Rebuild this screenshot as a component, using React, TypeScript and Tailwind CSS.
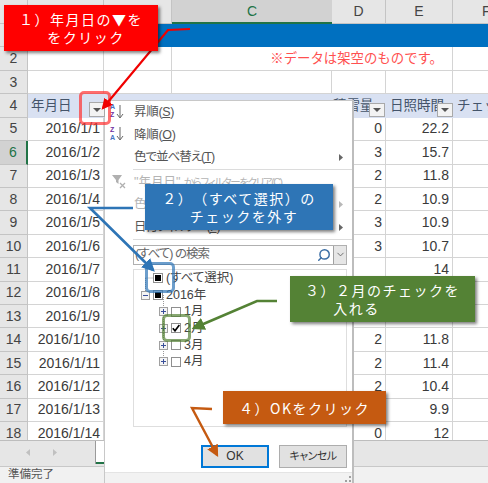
import React from 'react'
import { ChevronDown, Search } from 'lucide-react'

const rows = [
  ['1', '', '', ''],
  ['2', '', '', ''],
  ['3', '', '', ''],
  ['4', '', '', ''],
  ['5', '2016/1/1', '0', '22.2'],
  ['6', '2016/1/2', '3', '15.7'],
  ['7', '2016/1/3', '2', '11.8'],
  ['8', '2016/1/4', '2', '10.9'],
  ['9', '2016/1/5', '3', '10.9'],
  ['10', '2016/1/6', '3', '10.7'],
  ['11', '2016/1/7', '', '14'],
  ['12', '2016/1/8', '', ''],
  ['13', '2016/1/9', '', ''],
  ['14', '2016/1/10', '2', '11.8'],
  ['15', '2016/1/11', '2', '11.4'],
  ['16', '2016/1/12', '2', '10.4'],
  ['17', '2016/1/13', '', '9.9'],
  ['18', '2016/1/14', '0', '12'],
]

const gridCols = 'grid grid-cols-[28px_76px_68px_160px_54px_67px_35px]'
const cell = 'border-r border-b border-[#d4d4d4] flex items-center justify-end pr-[3px] overflow-hidden whitespace-nowrap'

const FilterBtn = ({ className }: { className: string }) => (
  <span className={`absolute flex items-center justify-center bg-[#f3f3f3] border border-[#a9a9a9] ${className}`}>
    <svg width="8" height="4" viewBox="0 0 8 4"><path d="M0 0h8L4 4z" fill="#555" /></svg>
  </span>
)

const HeaderRow = () => (
  <div className={`${gridCols} h-[24px] bg-[#e6e6e6] text-[14px] text-[#444]`}>
    <div className="border-r border-b border-[#c4c4c4]" />
    <div className="border-r border-b border-[#c4c4c4]" />
    <div className="border-r border-b border-[#c4c4c4]" />
    <div className="flex items-center justify-center bg-[#d2d2d2] border-b-2 border-[#217346] text-[#217346]">C</div>
    <div className="flex items-center justify-center border-r border-b border-[#c4c4c4]">D</div>
    <div className="flex items-center justify-center border-r border-b border-[#c4c4c4]">E</div>
    <div className="flex items-center pl-[29px] overflow-hidden border-b border-[#c4c4c4]">F</div>
  </div>
)

const Row = ({ r }: { r: string[] }) => {
  const n = r[0]
  const headCls = n === '6'
    ? 'bg-[#d2d2d2] text-[#217346] border-r-2 border-r-[#217346]'
    : 'bg-[#e6e6e6] text-[#444] border-r border-r-[#c4c4c4]'
  if (n === '1') {
    return (
      <div className={`${gridCols} h-[23.43px]`}>
        <div className={`flex items-center justify-center border-b border-[#c4c4c4] ${headCls}`}>{n}</div>
        <div className="col-span-6 bg-[#0070c0]" />
      </div>
    )
  }
  if (n === '2') {
    return (
      <div className={`${gridCols} h-[23.43px]`}>
        <div className={`flex items-center justify-center border-b border-[#c4c4c4] ${headCls}`}>{n}</div>
        <div className={cell} />
        <div className={cell} />
        <div className={`${cell} col-span-3 text-[#ff5050] text-[13.4px] pr-[9px]`}>※データは架空のものです。</div>
        <div className="border-b border-[#d4d4d4]" />
      </div>
    )
  }
  if (n === '4') {
    return (
      <div className={`${gridCols} h-[23.43px] text-[13.5px] text-[#44546a]`}>
        <div className={`flex items-center justify-center border-b border-[#c4c4c4] text-[14px] ${headCls}`}>{n}</div>
        <div className="relative bg-[#d9e1f2] flex items-center pl-[3px]">年月日</div>
        <div className="bg-[#d9e1f2]" />
        <div className="bg-[#d9e1f2]" />
        <div className="relative bg-[#d9e1f2] flex items-center pl-[1px] whitespace-nowrap">
          積雪量
          <FilterBtn className="left-[37px] top-[9px] w-[16px] h-[14px]" />
        </div>
        <div className="relative bg-[#d9e1f2] flex items-center pl-[4px] whitespace-nowrap overflow-visible">
          日照時間
          <FilterBtn className="left-[51px] top-[9px] w-[16px] h-[14px]" />
        </div>
        <div className="bg-[#d9e1f2] flex items-center pl-[4px] whitespace-nowrap overflow-hidden">チェック</div>
      </div>
    )
  }
  return (
    <div className={`${gridCols} h-[23.43px] text-[#3a3a3a]`}>
      <div className={`flex items-center justify-center border-b border-[#c4c4c4] ${headCls}`}>{n}</div>
      <div className={cell}>{r[1]}</div>
      <div className={cell} />
      <div className={cell} />
      <div className={cell}>{r[2]}</div>
      <div className={cell}>{r[3]}</div>
      <div className="border-b border-[#d4d4d4]" />
    </div>
  )
}

const MenuItem = ({ label, disabled, arrow, icon }: { label: React.ReactNode; disabled?: boolean; arrow?: boolean; icon?: React.ReactNode }) => (
  <div className={`relative h-[22.6px] flex items-center pl-[29px] pr-[9px] whitespace-nowrap text-[12.5px] [font-feature-settings:'palt'] ${disabled ? 'text-[#b4b4b4]' : 'text-[#555]'}`}>
    {icon}
    <span>{label}</span>
    {arrow && (
      <svg className="ml-auto" width="4" height="7" viewBox="0 0 4 7">
        <path d="M0 0l4 3.5L0 7z" fill={disabled ? '#b8b8b8' : '#666'} />
      </svg>
    )}
  </div>
)

const SortIcon = ({ top, bottom, topCls, bottomCls }: { top: string; bottom: string; topCls: string; bottomCls: string }) => (
  <span className="absolute left-[5px] top-[2px] flex items-center">
    <span className="flex flex-col text-[7px] leading-[8px] font-bold">
      <span className={topCls}>{top}</span>
      <span className={bottomCls}>{bottom}</span>
    </span>
    <svg width="8" height="15" viewBox="0 0 8 15" className="ml-[1px]">
      <path d="M4 1v12M1 10l3 4 3-4" fill="none" stroke="#666" strokeWidth="1" />
    </svg>
  </span>
)

const Expander = ({ sign }: { sign: 'plus' | 'minus' }) => (
  <svg width="9" height="9" viewBox="0 0 9 9" className="shrink-0 bg-white">
    <rect x="0.5" y="0.5" width="8" height="8" fill="#f4f4f4" stroke="#a0a0a0" />
    <path d={sign === 'plus' ? 'M2 4.5h5M4.5 2v5' : 'M2 4.5h5'} stroke="#3a4f9a" strokeWidth="1" />
  </svg>
)

const Box = ({ mark }: { mark?: 'mixed' | 'check' }) => (
  <span className="shrink-0 w-[10px] h-[10px] border border-[#8f8f8f] bg-white flex items-center justify-center">
    {mark === 'mixed' && <span className="w-[6px] h-[6px] bg-black" />}
    {mark === 'check' && (
      <svg width="8" height="8" viewBox="0 0 8 8">
        <path d="M0.8 4.2l2.2 2.6L7.4 1" fill="none" stroke="#000" strokeWidth="1.7" />
      </svg>
    )}
  </span>
)

const TreeRow = ({ indent, sign, mark, label }: { indent: string; sign?: 'plus' | 'minus'; mark?: 'mixed' | 'check'; label: string }) => (
  <div className={`h-[16.7px] flex items-center whitespace-nowrap text-[12.5px] [font-feature-settings:'palt'] text-[#444] ${indent}`}>
    {sign ? <Expander sign={sign} /> : <span className="w-[9px] shrink-0" />}
    <span className="w-[3px] shrink-0" />
    <Box mark={mark} />
    <span className="ml-[3px]">{label}</span>
  </div>
)

const Callout = ({ className, first, second, secondCls }: { className: string; first: string; second?: string; secondCls?: string }) => (
  <div className={`absolute flex flex-col items-center justify-center text-white text-[14px] leading-[18px] tracking-[1.5px] font-['Noto_Sans_CJK_JP',sans-serif] [text-spacing-trim:space-all] whitespace-nowrap shadow-[2px_2px_3px_rgba(0,0,0,0.5)] ${className}`}>
    <div>{first}</div>
    {second && <div className={secondCls}>{second}</div>}
  </div>
)

const Arrows = () => (
  <svg className="absolute left-0 top-0 pointer-events-none" width="488" height="483" viewBox="0 0 488 483">
    <defs>
      <marker id="hr" markerWidth="5" markerHeight="5" refX="4" refY="2.5" orient="auto"><path d="M0 0l5 2.5L0 5z" fill="#f00000" /></marker>
      <marker id="hb" markerWidth="5" markerHeight="5" refX="4" refY="2.5" orient="auto"><path d="M0 0l5 2.5L0 5z" fill="#2e75b6" /></marker>
      <marker id="hg" markerWidth="5" markerHeight="5" refX="4" refY="2.5" orient="auto"><path d="M0 0l5 2.5L0 5z" fill="#548235" /></marker>
      <marker id="ho" markerWidth="5" markerHeight="5" refX="4" refY="2.5" orient="auto"><path d="M0 0l5 2.5L0 5z" fill="#c55a11" /></marker>
    </defs>
    <polyline points="190,29 168,30 103,108" fill="none" stroke="#f00000" strokeWidth="2.2" markerEnd="url(#hr)" />
    <polyline points="133,208 90,208 153,270" fill="none" stroke="#2e75b6" strokeWidth="2.6" markerEnd="url(#hb)" />
    <polyline points="277,301 257,301 194,328" fill="none" stroke="#548235" strokeWidth="2.6" markerEnd="url(#hg)" />
    <polyline points="212,409 192,408 217,455" fill="none" stroke="#c55a11" strokeWidth="2.4" markerEnd="url(#ho)" />
  </svg>
)

export default function App() {
  return (
    <div className="relative w-[488px] h-[483px] overflow-hidden bg-white text-[14px] font-['Liberation_Sans','Noto_Sans_CJK_JP',sans-serif]">
      <HeaderRow />
      <div className="h-[416px] overflow-hidden">
        {rows.map((r) => <Row key={r[0]} r={r} />)}
      </div>
      <div className="h-[26px] flex bg-[#e6e6e6] border-t border-[#bdbdbd]">
        <div className="w-[96px] h-[23px] border-r border-[#9a9a9a] flex items-center gap-[23px] pl-[26px]">
          <svg width="4" height="7" viewBox="0 0 4 7"><path d="M4 0L0 3.5 4 7z" fill="#c0c0c0" /></svg>
          <svg width="4" height="7" viewBox="0 0 4 7"><path d="M0 0l4 3.5L0 7z" fill="#c0c0c0" /></svg>
        </div>
        <div className="w-[9px] h-[23px] bg-white border-b-2 border-[#217346]" />
      </div>
      <div className="h-[17px] bg-[#f1f1f1] border-t border-[#c8c8c8] flex items-center pl-[8px] text-[11.5px] text-[#555]">
        準備完了
      </div>

      {/* filter dropdown */}
      <div className="absolute left-[104px] top-[100px] w-[250px] h-[383px] bg-white border-t border-l border-[#c8c8c8] border-r-2 border-r-[#bdbdbd] flex flex-col">
        <MenuItem label={<span className="tracking-[-0.3px]">昇順(<u>S</u>)</span>} icon={<SortIcon top="A" bottom="Z" topCls="text-[#4472c4]" bottomCls="text-[#7030a0]" />} />
        <MenuItem label={<span className="tracking-[-0.3px]">降順(<u>O</u>)</span>} icon={<SortIcon top="Z" bottom="A" topCls="text-[#7030a0]" bottomCls="text-[#4472c4]" />} />
        <MenuItem label={<span className="tracking-[-1px]">色で並べ替え(<u>T</u>)</span>} arrow />
        <div className="my-[0.5px] ml-[28px] border-t border-[#dcdcdc]" />
        <MenuItem
          label={<>"年月日" <span className="text-[10.5px] tracking-[-1.4px]">からフィルターをクリア(C)</span></>}
          disabled
          icon={
            <svg className="absolute left-[6px] top-[3px]" width="16" height="16" viewBox="0 0 16 16">
              <path d="M1 1h10L7.5 6v4L5 8V6z" fill="#b0b0b0" />
              <path d="M9 9l5 5M14 9l-5 5" stroke="#b0b0b0" strokeWidth="1.3" />
            </svg>
          }
        />
        <MenuItem label={<span className="tracking-[-1px]">色フィルター(I)</span>} disabled arrow />
        <MenuItem label={<span className="tracking-[-1px]">日付フィルター(<u>F</u>)</span>} arrow />
        <div className="my-[0.5px] ml-[28px] border-t border-[#dcdcdc]" />
        <div className="mt-[4px] ml-[28px] mr-[5px] h-[20px] border border-[#b0b0b0] flex items-center pl-[1px] text-[12.5px] [font-feature-settings:'palt'] text-[#666]">
          <span className="whitespace-nowrap tracking-[-1px]">(すべて) の検索</span>
          <Search className="ml-auto mr-[2px] -scale-x-100 text-[#3b6ea5]" size={14} strokeWidth={2.5} />
          <span className="w-[13px] h-[18px] bg-[#e6e6e6] border-l border-[#a0a0a0] flex items-center justify-center">
            <ChevronDown size={11} className="text-[#666]" />
          </span>
        </div>
        <div className="relative mt-[4px] ml-[28px] mr-[5px] h-[158px] border border-[#dedede] pt-[0.5px]">
          <svg className="absolute left-0 top-0" width="60" height="100" viewBox="0 0 60 100">
            <path d="M11.5 8h10M11.5 8v17M29.5 25v67M29.5 42h4M29.5 59h4M29.5 75h4M29.5 92h4" fill="none" stroke="#999" strokeWidth="1" strokeDasharray="1 1" />
          </svg>
          <div className="relative">
            <TreeRow indent="pl-[7px]" mark="mixed" label="(すべて選択)" />
            <TreeRow indent="pl-[7px]" sign="minus" mark="mixed" label="2016年" />
            <TreeRow indent="pl-[25px]" sign="plus" label="1月" />
            <TreeRow indent="pl-[25px]" sign="plus" mark="check" label="2月" />
            <TreeRow indent="pl-[25px]" sign="plus" label="3月" />
            <TreeRow indent="pl-[25px]" sign="plus" label="4月" />
          </div>
        </div>
        <div className="mt-[18px] ml-[96px] flex gap-[10px] text-[12px] text-[#333]">
          <button className="w-[68px] h-[23px] bg-[#e1e1e1] border-2 border-[#0078d7] flex items-center justify-center">OK</button>
          <button className="w-[68px] h-[23px] bg-[#e1e1e1] border border-[#adadad] flex items-center justify-center text-[11px] tracking-[-0.5px] [font-feature-settings:'palt']">キャンセル</button>
        </div>
        <div className="mt-auto h-[11px] bg-[#f2f2f2] border-t border-[#e4e4e4] flex items-end justify-end pr-[1px] pb-[1px]">
          <svg width="6" height="6" viewBox="0 0 6 6"><path d="M4 0h2v2H4zM0 4h2v2H0zM4 4h2v2H4z" fill="#a0a0a0" /></svg>
        </div>
      </div>

      {/* highlights */}
      <FilterBtn className="left-[89px] top-[102px] w-[16px] h-[15px]" />
      <div className="absolute left-[79px] top-[91px] w-[32px] h-[34px] rounded-[5px] border-[3px] border-[#ff3030]/70" />
      <div className="absolute left-[145px] top-[262px] w-[30px] h-[31px] rounded-[5px] border-[3px] border-[#2e75b6]/70" />
      <div className="absolute left-[162px] top-[314px] w-[29px] h-[28px] rounded-[5px] border-[3px] border-[#548235]/70" />

      <Arrows />

      <Callout className="left-[4px] top-[5px] w-[154px] h-[46px] bg-[#ff0000]" first="１）年月日の▼を" second="をクリック" secondCls="ml-[10px]" />
      <Callout className="left-[145px] top-[184px] w-[188px] h-[46px] bg-[#2e75b6]" first="２）（すべて選択）の" second="チェックを外す" secondCls="ml-[10px]" />
      <Callout className="left-[290px] top-[276px] w-[185px] h-[46px] bg-[#548235]" first="３）２月のチェックを" second="入れる" secondCls="mr-[52px]" />
      <Callout className="left-[223px] top-[391px] w-[163px] h-[33px] bg-[#c55a11]" first="４）OKをクリック" />
    </div>
  )
}
